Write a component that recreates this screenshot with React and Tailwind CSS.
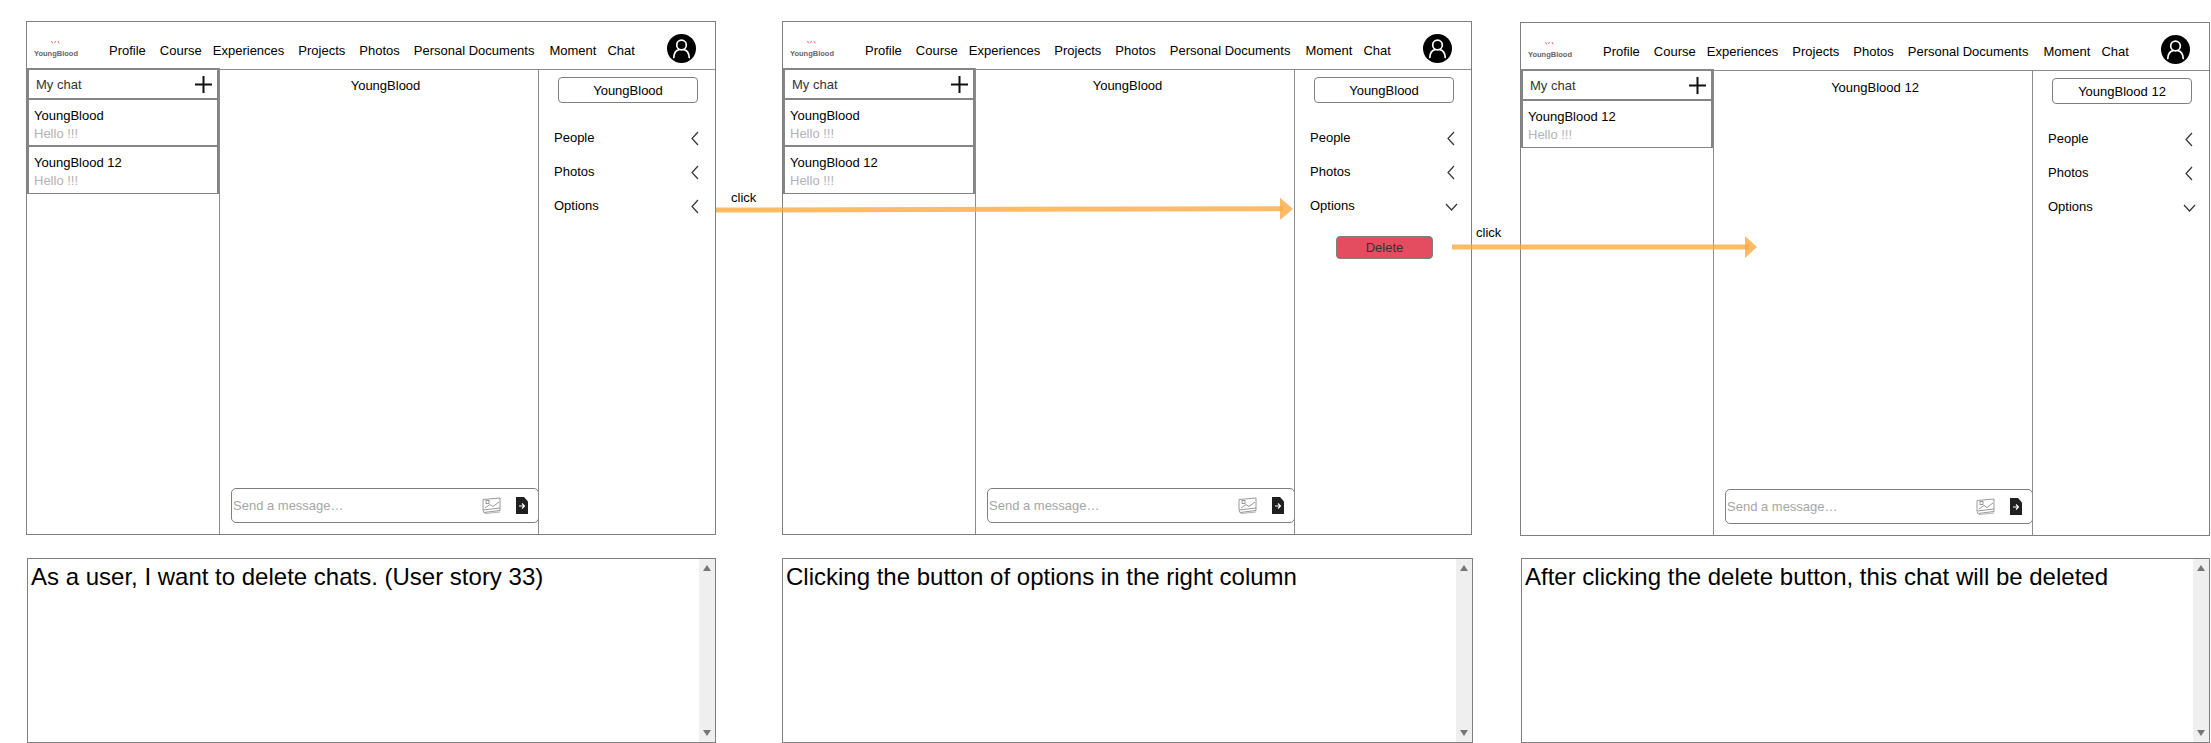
import React from 'react';

const NAV = [
  { label: 'Profile', cls: 'mr-[14px]' },
  { label: 'Course', cls: 'mr-[11px]' },
  { label: 'Experiences', cls: 'mr-[14px]' },
  { label: 'Projects', cls: 'mr-[14px]' },
  { label: 'Photos', cls: 'mr-[14px]' },
  { label: 'Personal Documents', cls: 'mr-[15px]' },
  { label: 'Moment', cls: 'mr-[11px]' },
  { label: 'Chat', cls: '' },
];

function Logo() {
  return (
    <div className="w-[82px] pl-[7px] pt-[18px] shrink-0">
      <svg width="42" height="6" viewBox="0 0 42 6" className="block">
        <path d="M17.5 1l1.2 2.5M20.5 3l1-2" stroke="#e0707a" strokeWidth="1" fill="none" />
        <path d="M24 1l1.2 2.5" stroke="#e0707a" strokeWidth="1" fill="none" />
      </svg>
      <div className="mt-[3px] text-[7.5px] leading-[10px] font-bold text-[#666] whitespace-nowrap">YoungBlood</div>
    </div>
  );
}

function Avatar() {
  return (
    <svg width="29" height="29" viewBox="0 0 29 29" className="ml-auto mr-[19px] mt-[12px] shrink-0">
      <circle cx="14.5" cy="14.5" r="14.5" fill="#000" />
      <circle cx="14.5" cy="11" r="4.8" fill="none" stroke="#fff" strokeWidth="1.7" />
      <path d="M6.8 23.5c.3-4.6 2.6-7.2 5.2-7.8M22.2 23.5c-.3-4.6-2.6-7.2-5.2-7.8" fill="none" stroke="#fff" strokeWidth="1.7" strokeLinecap="round" />
    </svg>
  );
}

function ChevronLeft() {
  return (
    <svg width="8" height="15" viewBox="0 0 8 15" className="mt-[2px] shrink-0">
      <path d="M7 1L1 7.5L7 14" fill="none" stroke="#333" strokeWidth="1.2" />
    </svg>
  );
}

function ChevronDown() {
  return (
    <svg width="13" height="8" viewBox="0 0 13 8" className="mt-[4px] -mr-[3px] shrink-0">
      <path d="M1 1L6.5 7L12 1" fill="none" stroke="#333" strokeWidth="1.2" />
    </svg>
  );
}

function PlusIcon() {
  return (
    <svg width="17" height="17" viewBox="0 0 17 17" className="shrink-0">
      <path d="M0 8.5H17M8.5 0V17" stroke="#111" strokeWidth="2" />
    </svg>
  );
}

function PhotoIcon() {
  return (
    <svg width="19" height="17" viewBox="0 0 19 17" className="shrink-0">
      <path d="M1 2.5L18 1V11L1 13Z" fill="#fff" stroke="#808080" strokeWidth="0.8" />
      <path d="M1 13.5L2 15.5L18 13.5V11" fill="none" stroke="#808080" strokeWidth="0.8" />
      <path d="M2 15.5L3 16.5L18 15" fill="none" stroke="#a0a0a0" strokeWidth="0.8" />
      <path d="M3 11L8 7.5L11 9.5L17 5" fill="none" stroke="#808080" strokeWidth="0.8" />
      <rect x="4" y="3.5" width="3" height="3" fill="none" stroke="#808080" strokeWidth="0.8" />
    </svg>
  );
}

function SendIcon() {
  return (
    <svg width="12" height="17" viewBox="0 0 12 17" className="shrink-0">
      <path d="M0 0H8L12 4.5V17H0Z" fill="#1f1f1f" />
      <path d="M3 9H8.5M6 6.5L8.5 9L6 11.5" fill="none" stroke="#fff" strokeWidth="1.1" />
    </svg>
  );
}

function SideRow({ label, open }) {
  return (
    <div className="h-[34px] pl-[15px] pr-[16px] flex items-center justify-between">
      <span>{label}</span>
      {open ? <ChevronDown /> : <ChevronLeft />}
    </div>
  );
}

function Wireframe({ title, titleCls, chats, open, showDelete, wrapCls }) {
  return (
    <div className={`w-[690px] h-[514px] border border-[#7f7f7f] flex flex-col shrink-0 text-[13px] leading-[15px] text-black bg-white ${wrapCls}`}>
      {/* Top nav */}
      <div className="h-[48px] border-b border-[#8c8c8c] flex items-start shrink-0">
        <Logo />
        <nav className="flex mt-[21px] whitespace-nowrap">
          {NAV.map((n) => (
            <span key={n.label} className={n.cls}>{n.label}</span>
          ))}
        </nav>
        <Avatar />
      </div>

      <div className="flex flex-1 min-h-0">
        {/* Chat list */}
        <div className="w-[193px] shrink-0 border-r border-[#8c8c8c] -mt-[2px]">
          <div className="h-[32px] border-2 border-[#858585] flex items-center justify-between pl-[7px] pr-[5px] text-[#333]">
            <span>My chat</span>
            <PlusIcon />
          </div>
          {chats.map((c) => (
            <div key={c} className="h-[47px] border-x-2 border-b-2 last:border-b border-[#858585] pl-[5px] pt-[8px]">
              <div>{c}</div>
              <div className="mt-[3px] text-[#b3b3b3]">Hello !!!</div>
            </div>
          ))}
        </div>

        {/* Conversation */}
        <div className="w-[318px] shrink-0 flex flex-col justify-between">
          <div className={`text-center mt-[8px] ${titleCls}`}>{title}</div>
          <div className="h-[35px] ml-[11px] -mr-px mb-[11px] border border-[#7f7f7f] rounded-[5px] bg-white flex items-center pl-[1px] pr-[10px] text-[#a6a6a6]">
            <span className="flex-1">Send a message…</span>
            <span className="flex items-center gap-[15px]">
              <PhotoIcon />
              <SendIcon />
            </span>
          </div>
        </div>

        {/* Right column */}
        <div className="flex-1 min-w-0 border-l border-[#8c8c8c]">
          <div className="mt-[7px] ml-[19px] w-[140px] h-[26px] border border-[#7f7f7f] rounded-[4px] flex items-center justify-center">
            {title}
          </div>
          <div className="mt-[17px]">
            <SideRow label="People" />
            <SideRow label="Photos" />
            <SideRow label="Options" open={open} />
          </div>
          {showDelete && (
            <div className="mt-[14px] ml-[41px] w-[97px] h-[23px] border border-[#7f7f7f] rounded-[4px] bg-[#e44d60] text-[#333] flex items-center justify-center">
              Delete
            </div>
          )}
        </div>
      </div>
    </div>
  );
}

function StoryBox({ text, cls }) {
  return (
    <div className={`h-[185px] border border-[#7f7f7f] flex text-[24px] leading-[28px] text-black ${cls}`}>
      <div className="flex-1 min-w-0 pl-[3px] pt-[4px] whitespace-nowrap overflow-hidden">{text}</div>
      <div className="w-[16px] shrink-0 bg-[#efefef] flex flex-col items-center justify-between py-[6px]">
        <svg width="8" height="6" viewBox="0 0 8 6"><path d="M4 0L8 6H0Z" fill="#777" /></svg>
        <svg width="8" height="6" viewBox="0 0 8 6"><path d="M0 0H8L4 6Z" fill="#777" /></svg>
      </div>
    </div>
  );
}

export default function App() {
  const both = ['YoungBlood', 'YoungBlood 12'];
  return (
    <div className="relative w-[2211px] h-[743px] overflow-hidden bg-white font-['Liberation_Sans',Arial,sans-serif]">
      <div className="flex pl-[26px] pt-[21px]">
        <div className="w-[690px] shrink-0">
          <Wireframe title="YoungBlood" titleCls="pl-[13px]" chats={both} wrapCls="" />
          <StoryBox text="As a user, I want to delete chats. (User story 33)" cls="mt-[23px] ml-px" />
        </div>
        <div className="w-[690px] shrink-0 ml-[66px]">
          <Wireframe title="YoungBlood" titleCls="pr-[15px]" chats={both} open showDelete wrapCls="" />
          <StoryBox text="Clicking the button of options in the right column" cls="mt-[23px] -mr-px" />
        </div>
        <div className="w-[690px] shrink-0 ml-[48px]">
          <Wireframe title="YoungBlood 12" titleCls="pl-[4px] pt-px" chats={['YoungBlood 12']} open wrapCls="mt-px" />
          <StoryBox text="After clicking the delete button, this chat will be deleted" cls="mt-[22px] ml-px" />
        </div>
      </div>

      {/* Flow arrows between the wireframes */}
      <svg width="2211" height="743" className="absolute inset-0 pointer-events-none">
        <g fill="#fcaa41" fillOpacity="0.8">
          <path d="M716 207.5L1283 206.2V211.2L716 212.5Z" />
          <path d="M1280 197.7L1293 209L1280 220Z" />
          <path d="M1452 244.5H1749V249.5H1452Z" />
          <path d="M1745 236L1757 247L1745 258Z" />
        </g>
      </svg>
      <span className="absolute left-[731px] top-[190px] text-[13px] leading-[15px] text-black">click</span>
      <span className="absolute left-[1476px] top-[225px] text-[13px] leading-[15px] text-black">click</span>
    </div>
  );
}
